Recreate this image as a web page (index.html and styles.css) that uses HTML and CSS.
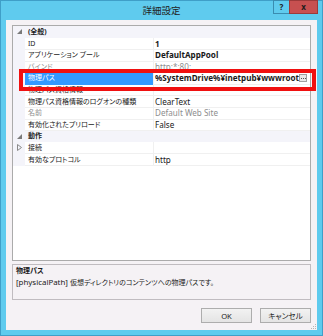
FILE: index.html
```html
<html>

<head>
    <title>詳細設定</title>
    <link rel="stylesheet" href="styles.css">
</head>

<body>
    <div class="window">
        <div class="titlebar">
            <span></span>
            <span class="title">詳細設定</span>
            <div class="captionButtons">
                <span class="capBtn help">?</span>
                <span class="capBtn close">x</span>
            </div>
        </div>

        <div class="client">
            <div class="propGrid">
                <div class="row cat">
                    <span class="gutter"><svg width="5" height="5"><polygon points="5,0 5,5 0,5" fill="#7a7a7a" /></svg></span>
                    <span class="name">(全般)</span>
                </div>
                <div class="row">
                    <span class="gutter"></span>
                    <span class="name">ID</span>
                    <span class="value bold">1</span>
                </div>
                <div class="row">
                    <span class="gutter"></span>
                    <span class="name">アプリケーション プール</span>
                    <span class="value bold">DefaultAppPool</span>
                </div>
                <div class="row">
                    <span class="gutter"></span>
                    <span class="name dim">バインド</span>
                    <span class="value dim">http:*:80:</span>
                </div>
                <div class="row">
                    <span class="gutter"></span>
                    <span class="name selected">物理パス</span>
                    <span class="value bold">%SystemDrive%¥inetpub¥wwwroot<span class="dotsBtn"><svg width="5" height="5"><rect x="0" y="3" width="1" height="1" fill="#555" /><rect x="2" y="3" width="1" height="1" fill="#555" /><rect x="4" y="3" width="1" height="1" fill="#555" /></svg></span></span>
                </div>
                <div class="row">
                    <span class="gutter"></span>
                    <span class="name">物理パス資格情報</span>
                    <span class="value"></span>
                </div>
                <div class="row">
                    <span class="gutter"></span>
                    <span class="name">物理パス資格情報のログオンの種類</span>
                    <span class="value">ClearText</span>
                </div>
                <div class="row">
                    <span class="gutter"></span>
                    <span class="name dim">名前</span>
                    <span class="value dim">Default Web Site</span>
                </div>
                <div class="row">
                    <span class="gutter"></span>
                    <span class="name">有効化されたプリロード</span>
                    <span class="value">False</span>
                </div>
                <div class="row cat">
                    <span class="gutter"><svg width="5" height="5"><polygon points="5,0 5,5 0,5" fill="#7a7a7a" /></svg></span>
                    <span class="name">動作</span>
                </div>
                <div class="row">
                    <span class="gutter"><svg width="5" height="7"><polygon points="0.5,0.5 4.5,3.5 0.5,6.5" fill="none" stroke="#8a8a8a" stroke-width="1" /></svg></span>
                    <span class="name">接続</span>
                    <span class="value"></span>
                </div>
                <div class="row">
                    <span class="gutter"></span>
                    <span class="name">有効なプロトコル</span>
                    <span class="value">http</span>
                </div>

                <!-- annotation drawn over the selected row -->
                <div class="redBox"></div>
            </div>

            <div class="descBox">
                <div class="descTitle ja">物理パス</div>
                <div>[physicalPath] <span class="ja">仮想ディレクトリのコンテンツへの物理パスです。</span></div>
            </div>

            <div class="buttonRow">
                <button class="button">OK</button>
                <button class="button ja">キャンセル</button>
            </div>

            <svg class="grip" width="5" height="5">
                <rect x="4" y="0" width="1" height="1" fill="#b5b5b5" />
                <rect x="2" y="2" width="1" height="1" fill="#b5b5b5" />
                <rect x="4" y="2" width="1" height="1" fill="#b5b5b5" />
                <rect x="0" y="4" width="1" height="1" fill="#b5b5b5" />
                <rect x="2" y="4" width="1" height="1" fill="#b5b5b5" />
                <rect x="4" y="4" width="1" height="1" fill="#b5b5b5" />
            </svg>
        </div>
    </div>
</body>

</html>
```

FILE: styles.css
```css
body {
    margin: 0;
    font-family: "Noto Sans", "Noto Sans CJK JP", sans-serif;
    font-feature-settings: "palt";
    font-size: 7.9px;
    color: #1a1a1a;
}

/* japanese labels render narrower than latin in the original font */
.ja {
    font-size: 7px;
}

.window {
    width: 323px;
    height: 336px;
    box-sizing: border-box;
    border: 1px solid #3f9fc8;
    background-color: #5fcbee;
    display: flex;
    flex-direction: column;
}

.titlebar {
    height: 19px;
    display: grid;
    grid-template-columns: 1fr auto 1fr;
    align-items: start;
}

.title {
    font-size: 9.5px;
    line-height: 20px;
    color: #222;
}

.captionButtons {
    justify-self: end;
    display: flex;
    margin-right: 4px;
    margin-top: -1px;
}

.capBtn {
    height: 14px;
    box-sizing: border-box;
    text-align: center;
    font-weight: bold;
    font-size: 8px;
    line-height: 12px;
    color: #1c1c1c;
}

.help {
    width: 16px;
    border: 1px solid #3a8cb0;
    border-right: none;
}

.close {
    width: 29px;
    background-color: #c75050;
    border: 1px solid #9c3a3a;
}

.client {
    position: relative;
    flex: 1;
    margin: 0 5px 5px 5px;
    background-color: #f5f2f5;
    padding: 5px 6px 0 6px;
}

.propGrid {
    position: relative;
    height: 236px;
    box-sizing: border-box;
    border: 1px solid #ababab;
    background-color: white;
}

.row {
    display: grid;
    grid-template-columns: 12px 129px 1fr;
    height: 11.6px;
    line-height: 11.6px;
    white-space: nowrap;
}

.gutter {
    background-color: #f4f4fa;
    display: flex;
    align-items: center;
    justify-content: center;
    padding-left: 1px;
}

.name {
    padding-left: 3px;
    border-bottom: 1px solid #f0f0f0;
    border-right: 1px solid #f0f0f0;
    box-sizing: border-box;
    overflow: hidden;
    font-size: 7px;
}

.value {
    position: relative;
    padding-left: 1px;
    border-bottom: 1px solid #f0f0f0;
    box-sizing: border-box;
    font-size: 8.1px;
}

.cat {
    background-color: #f4f4fa;
    font-weight: bold;
}

.cat .name {
    grid-column: 2 / 4;
    border: none;
}

.bold {
    font-weight: bold;
}

.dim {
    color: #8e8e8e;
}

.selected {
    background-color: #3399ff;
    color: white;
    border-bottom-color: #3399ff;
}

.dotsBtn {
    position: absolute;
    right: 3px;
    top: 2px;
    width: 8px;
    height: 8px;
    box-sizing: border-box;
    border: 1px solid #a0a0a0;
    background-color: #e8e8e8;
    display: flex;
    justify-content: center;
}

.redBox {
    position: absolute;
    left: 6px;
    top: 43px;
    width: 297px;
    height: 22px;
    box-sizing: border-box;
    border: 4px solid #f01010;
}

.descBox {
    margin-top: 3px;
    height: 36px;
    box-sizing: border-box;
    border: 1px solid #c0bcc0;
    padding: 0 3px;
    line-height: 11.6px;
}

.descTitle {
    font-weight: bold;
}

.buttonRow {
    display: flex;
    justify-content: flex-end;
    gap: 8px;
    margin-top: 8px;
}

.button {
    width: 51px;
    height: 15px;
    border: 1px solid #adadad;
    background: linear-gradient(#f2f2f2, #e4e4e4);
    font-family: "Noto Sans", "Noto Sans CJK JP", sans-serif;
    font-feature-settings: "palt";
    font-size: 7.6px;
    line-height: 12px;
    padding: 0;
    color: #1a1a1a;
}

.grip {
    position: absolute;
    right: 1px;
    bottom: 1px;
}
```
